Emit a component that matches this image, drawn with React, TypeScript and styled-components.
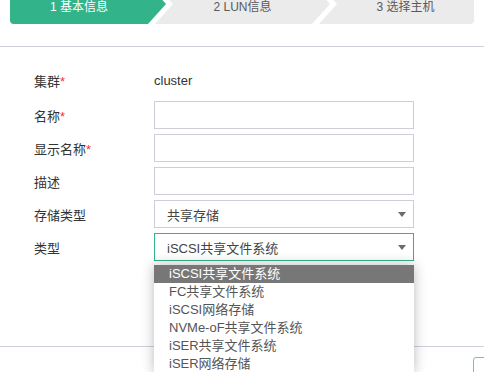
import React from "react";
import styled, { createGlobalStyle } from "styled-components";

const GlobalStyle = createGlobalStyle`
  html, body {
    margin: 0;
    padding: 0;
    background: #fff;
    overflow: hidden;
  }
  body {
    font-family: "Liberation Sans", "Noto Sans CJK SC", Arial, sans-serif;
    color: #333;
  }
`;

const Page = styled.div`
  width: 484px;
  height: 372px;
  overflow: hidden;
  display: flex;
  flex-direction: column;
`;

const Header = styled.div`
  height: 47px;
  padding-left: 10px;
  border-bottom: 1px solid #d0cedb;
  box-sizing: border-box;
`;

const StepBar = styled.div`
  display: flex;
  height: 40px;
  margin-top: -16px;
`;

const Step = styled.div<{ $w: number; $first?: boolean; $last?: boolean; $active?: boolean }>`
  flex: none;
  width: ${(p) => p.$w}px;
  height: 40px;
  margin-left: ${(p) => (p.$first ? 0 : -11)}px;
  padding: 3px ${(p) => (p.$last ? 0 : 18)}px 0 ${(p) => (p.$first ? 0 : 18)}px;
  box-sizing: border-box;
  display: flex;
  align-items: center;
  justify-content: center;
  font-size: 12px;
  background: ${(p) => (p.$active ? "#33b389" : "#ebebeb")};
  color: ${(p) => (p.$active ? "#fff" : "#5a5a5a")};
  border-radius: ${(p) => (p.$first ? "0 0 0 4px" : p.$last ? "0 0 4px 0" : "0")};
  clip-path: ${(p) =>
    p.$last
      ? "polygon(0 0, 100% 0, 100% 100%, 0 100%, 18px 50%)"
      : p.$first
      ? "polygon(0 0, calc(100% - 18px) 0, 100% 50%, calc(100% - 18px) 100%, 0 100%)"
      : "polygon(0 0, calc(100% - 18px) 0, 100% 50%, calc(100% - 18px) 100%, 0 100%, 18px 50%)"};
`;

const Form = styled.div`
  display: flex;
  flex-direction: column;
  gap: 5px;
  padding: 19px 0 0 34px;
  flex: 1;
`;

const Row = styled.div`
  display: flex;
  align-items: center;
  height: 28px;
  &:first-child {
    margin-bottom: 2px;
  }
`;

const Label = styled.div`
  width: 120px;
  font-size: 13px;
  color: #333;
`;

const Req = styled.span`
  color: #f03030;
`;

const Value = styled.div`
  font-size: 13px;
  color: #333;
`;

const Input = styled.div`
  width: 260px;
  height: 28px;
  box-sizing: border-box;
  border: 1px solid #cfcddb;
  background: #fff;
`;

const SelectWrap = styled.div`
  position: relative;
`;

const Select = styled.div<{ $focus?: boolean }>`
  width: 260px;
  height: 28px;
  box-sizing: border-box;
  border: 1px solid ${(p) => (p.$focus ? "#33b389" : "#cfcddb")};
  display: flex;
  align-items: center;
  justify-content: space-between;
  padding: 0 7px 0 12px;
  font-size: 13px;
  color: #444;
`;

const Caret = styled.span`
  width: 0;
  height: 0;
  border-left: 4.5px solid transparent;
  border-right: 4.5px solid transparent;
  border-top: 5px solid #6b6b73;
`;

const Menu = styled.ul`
  position: absolute;
  top: calc(100% + 4px);
  left: 0;
  width: 260px;
  margin: 0;
  padding: 0;
  list-style: none;
  background: #fff;
  box-shadow: 0 0 12px rgba(0, 0, 0, 0.28);
  z-index: 10;
`;

const Item = styled.li<{ $on?: boolean }>`
  height: 18px;
  line-height: 18px;
  padding-left: 15px;
  font-size: 13px;
  white-space: nowrap;
  background: ${(p) => (p.$on ? "#777" : "#fff")};
  color: ${(p) => (p.$on ? "#fff" : "#555")};
`;

const Footer = styled.div`
  flex: none;
  border-top: 1px solid #d0cedb;
  height: 15px;
  padding: 10px 0 0 473px;
`;

const Button = styled.div`
  width: 80px;
  height: 28px;
  border: 1px solid #6cc9a8;
  border-radius: 3px;
  box-sizing: border-box;
`;

const options = [
  "iSCSI共享文件系统",
  "FC共享文件系统",
  "iSCSI网络存储",
  "NVMe-oF共享文件系统",
  "iSER共享文件系统",
  "iSER网络存储",
];

export default function App() {
  return (
    <Page>
      <GlobalStyle />
      <Header>
        <StepBar>
          <Step $w={156} $first $active>
            1 基本信息
          </Step>
          <Step $w={175}>2 LUN信息</Step>
          <Step $w={155} $last>
            3 选择主机
          </Step>
        </StepBar>
      </Header>
      <Form>
        <Row>
          <Label>
            集群<Req>*</Req>
          </Label>
          <Value>cluster</Value>
        </Row>
        <Row>
          <Label>
            名称<Req>*</Req>
          </Label>
          <Input />
        </Row>
        <Row>
          <Label>
            显示名称<Req>*</Req>
          </Label>
          <Input />
        </Row>
        <Row>
          <Label>描述</Label>
          <Input />
        </Row>
        <Row>
          <Label>存储类型</Label>
          <Select>
            共享存储
            <Caret />
          </Select>
        </Row>
        <Row>
          <Label>类型</Label>
          <SelectWrap>
            <Select $focus>
              iSCSI共享文件系统
              <Caret />
            </Select>
            <Menu>
              {options.map((o, i) => (
                <Item key={o} $on={i === 0}>
                  {o}
                </Item>
              ))}
            </Menu>
          </SelectWrap>
        </Row>
      </Form>
      <Footer>
        <Button />
      </Footer>
    </Page>
  );
}
